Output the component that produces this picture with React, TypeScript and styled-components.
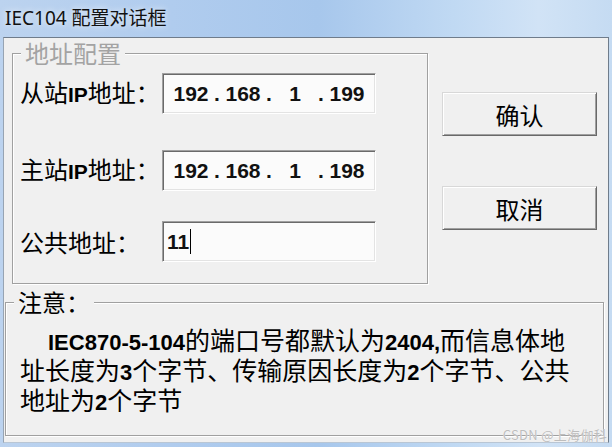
import React from "react";
import styled, { createGlobalStyle } from "styled-components";

const GlobalStyle = createGlobalStyle`
  html, body { margin: 0; padding: 0; background: #c8dcf2; }
  body { font-family: "Noto Sans CJK SC", "Noto Sans", sans-serif; }
  #root { width: 612px; height: 447px; }
`;

const Window = styled.div`
  position: relative;
  width: 612px;
  height: 447px;
  display: flex;
  flex-direction: column;
  overflow: hidden;
  background: linear-gradient(
    90deg,
    #bcd3ef 0%,
    #b0ccee 28%,
    #a7c7ec 52%,
    #c0d9f3 74%,
    #d1e3f6 88%,
    #c5dbf2 100%
  );
`;

const TitleBar = styled.div`
  flex: none;
  height: 37px;
  box-sizing: border-box;
  display: flex;
  align-items: center;
  padding: 0 0 4px 5px;
  font: 400 19px "Noto Sans", "Noto Sans CJK SC", sans-serif;
  color: #111;
  text-shadow: 0 0 6px rgba(255, 255, 255, 0.9);
`;

const Client = styled.div`
  flex: 1;
  margin: 0 3px 4px 3px;
  background: #f0f0f0;
  border: 1px solid;
  border-color: #6f7c8b #6f7c8b #b9c6d4 #97a4b3;
  display: flex;
  flex-direction: column;
`;

const TopRow = styled.div`
  display: flex;
  align-items: flex-start;
`;

const GroupBox = styled.fieldset`
  box-sizing: border-box;
  min-width: 0;
  border: 1px solid #a0a0a0;
  box-shadow: 1px 1px 0 #fff, inset 1px 1px 0 #fff;
`;

const AddressGroup = styled(GroupBox)`
  width: 416px;
  margin: 3px 0 0 8px;
  padding: 8px 0 21px 0;
`;

const NoteGroup = styled(GroupBox)`
  width: 599px;
  margin: 6px 0 0 1px;
  padding: 12px 0 19px 0;
`;

const Legend = styled.legend<{ $muted?: boolean }>`
  margin-left: 8px;
  padding: 0 4px;
  font-size: 24px;
  line-height: 24px;
  color: ${(p) => (p.$muted ? "#a3a3a3" : "#000")};
  background: #f0f0f0;
`;

const Rows = styled.div`
  padding-left: 7px;
`;

const Row = styled.div<{ $mt: number }>`
  display: flex;
  align-items: center;
  height: 41px;
  margin-top: ${(p) => p.$mt}px;
`;

const Label = styled.span`
  flex: none;
  width: 142px;
  font-size: 24px;
  line-height: 28px;
  color: #000;
  white-space: nowrap;
`;

const Latin = styled.span<{ $size?: number }>`
  font-family: "Liberation Sans", sans-serif;
  font-weight: 700;
  font-size: ${(p) => p.$size ?? 21}px;
`;

const Field = styled.div`
  flex: none;
  width: 214px;
  height: 41px;
  box-sizing: border-box;
  display: flex;
  align-items: center;
  padding-left: 8px;
  background: #fbfbfb;
  border: 1px solid;
  border-color: #a0a0a0 #fff #fff #a0a0a0;
  box-shadow: inset 1px 1px 0 #6a6a6a, inset -1px -1px 0 #e3e3e3;
  font: 700 21px "Liberation Sans", sans-serif;
  color: #111;
`;

const TextField = styled(Field)`
  padding-left: 4px;
`;

const Octet = styled.span`
  width: 40px;
  text-align: center;
`;

const Dot = styled.span`
  width: 12px;
  text-align: center;
`;

const Caret = styled.span`
  width: 1px;
  height: 25px;
  margin-left: 1px;
  background: #000;
`;

const ButtonColumn = styled.div`
  display: flex;
  flex-direction: column;
  gap: 50px;
  margin: 54px 0 0 14px;
`;

const Button = styled.button`
  width: 155px;
  height: 44px;
  box-sizing: border-box;
  padding: 0;
  background: #f0f0f0;
  border: 1px solid;
  border-color: #d8d8d8 #696969 #696969 #d8d8d8;
  box-shadow: inset 1px 1px 0 #fff, inset -1px -1px 0 #a0a0a0;
  font: 400 24px "Noto Sans CJK SC", sans-serif;
  color: #000;
  display: flex;
  align-items: center;
  justify-content: center;
`;

const Note = styled.p`
  margin: 0;
  padding-left: 14px;
  font-size: 25px;
  line-height: 26px;
  text-indent: 28px;
  white-space: nowrap;
  color: #000;
`;

const Watermark = styled.span`
  position: absolute;
  right: 5px;
  bottom: 3px;
  font: 400 13px "Noto Sans CJK SC", sans-serif;
  color: #bdbdbd;
  text-shadow: 0 0 1px #fff;
  letter-spacing: 0.3px;
`;

const IpField = ({ parts }: { parts: string[] }) => (
  <Field>
    {parts.map((p, i) => (
      <React.Fragment key={i}>
        <Octet>{p}</Octet>
        {i < parts.length - 1 && <Dot>.</Dot>}
      </React.Fragment>
    ))}
  </Field>
);

export default function App() {
  return (
    <>
      <GlobalStyle />
      <Window>
        <TitleBar>IEC104 配置对话框</TitleBar>
        <Client>
          <TopRow>
            <AddressGroup>
              <Legend $muted>地址配置</Legend>
              <Rows>
                <Row $mt={0}>
                  <Label>
                    从站<Latin>IP</Latin>地址：
                  </Label>
                  <IpField parts={["192", "168", "1", "199"]} />
                </Row>
                <Row $mt={36}>
                  <Label>
                    主站<Latin>IP</Latin>地址：
                  </Label>
                  <IpField parts={["192", "168", "1", "198"]} />
                </Row>
                <Row $mt={30}>
                  <Label>公共地址：</Label>
                  <TextField>
                    11
                    <Caret />
                  </TextField>
                </Row>
              </Rows>
            </AddressGroup>
            <ButtonColumn>
              <Button>确认</Button>
              <Button>取消</Button>
            </ButtonColumn>
          </TopRow>
          <NoteGroup>
            <Legend>注意：</Legend>
            <Note>
              <Latin $size={22}>IEC870-5-104</Latin>的端口号都默认为
              <Latin $size={22}>2404,</Latin>而信息体地
              <br />
              址长度为<Latin $size={22}>3</Latin>个字节、传输原因长度为
              <Latin $size={22}>2</Latin>个字节、公共
              <br />
              地址为<Latin $size={22}>2</Latin>个字节
            </Note>
          </NoteGroup>
        </Client>
        <Watermark>CSDN @上海伽科</Watermark>
      </Window>
    </>
  );
}
